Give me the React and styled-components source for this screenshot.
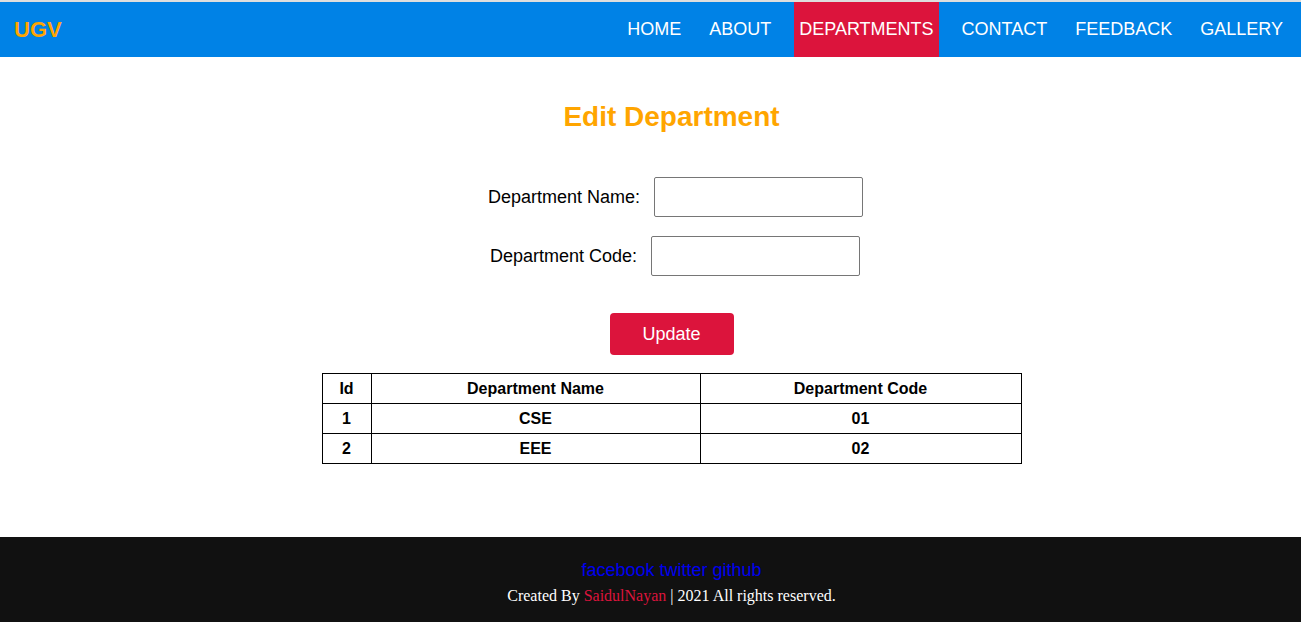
import React from "react";
import styled, { createGlobalStyle } from "styled-components";

const GlobalStyle = createGlobalStyle`
  * {
    box-sizing: border-box;
  }
  body {
    margin: 0;
    font-family: "Liberation Sans", Arial, sans-serif;
    background: #fff;
  }
`;

const Page = styled.div`
  border-top: 2px solid #dedede;
  min-height: 622px;
  display: flex;
  flex-direction: column;
`;

const Nav = styled.nav`
  height: 55px;
  background-color: #0082e6;
  display: flex;
  align-items: stretch;
  justify-content: space-between;
  padding: 0 13px 0 14px;
`;

const Logo = styled.div`
  color: #ffa500;
  font-size: 22px;
  font-weight: 700;
  display: flex;
  align-items: center;
  padding-top: 1px;
`;

const Links = styled.ul`
  list-style: none;
  margin: 0;
  padding: 0;
  display: flex;
  gap: 18px;
`;

const NavLink = styled.li`
  display: flex;
  align-items: center;
  padding: 0 5px;
  color: #fff;
  font-size: 18px;
  text-transform: uppercase;
  background-color: ${(p) => (p.active ? "#dc143c" : "transparent")};
`;

const Main = styled.main`
  flex: 1;
  display: flex;
  flex-direction: column;
  align-items: center;
  padding: 44px 0 72px 42px;
`;

const Title = styled.h2`
  margin: 0 0 44px;
  color: #ffa500;
  font-size: 28px;
  font-weight: 700;
`;

const Form = styled.form`
  display: flex;
  flex-direction: column;
  align-items: center;
  gap: 19px;
`;

const Row = styled.div`
  display: flex;
  align-items: center;
  gap: 14px;
  margin-left: ${(p) => p.shift || 0}px;
`;

const Label = styled.label`
  font-size: 18px;
  color: #000;
`;

const Input = styled.input`
  width: 209px;
  height: 40px;
  border: 1px solid #767676;
  border-radius: 2px;
  font-size: 16px;
  padding: 0 6px;
`;

const Button = styled.button`
  margin-top: 18px;
  width: 124px;
  height: 42px;
  border: none;
  border-radius: 4px;
  background-color: #dc143c;
  color: #fff;
  font-family: "Liberation Sans", Arial, sans-serif;
  font-size: 18px;
  cursor: pointer;
`;

const Table = styled.table`
  margin-top: 18px;
  width: 700px;
  border-collapse: collapse;
`;

const Cell = styled.td`
  border: 1px solid #000;
  height: 30px;
  padding: 0;
  text-align: center;
  font-size: 16px;
  font-weight: 700;
  width: ${(p) => p.w || "auto"};
`;

const Footer = styled.footer`
  background-color: #111;
  height: 85px;
  display: flex;
  flex-direction: column;
  align-items: center;
  padding-top: 23px;
  padding-left: 42px;
`;

const Social = styled.div`
  display: flex;
  gap: 5px;
  font-size: 18px;
`;

const SocialLink = styled.a`
  color: #0000ee;
  text-decoration: none;
`;

const Credit = styled.p`
  margin: 6px 0 0;
  color: #fff;
  font-family: "Liberation Serif", "Times New Roman", serif;
  font-size: 16px;
`;

const Author = styled.span`
  color: #dc143c;
`;

const departments = [
  { id: 1, name: "CSE", code: "01" },
  { id: 2, name: "EEE", code: "02" },
];

export default function App() {
  return (
    <>
      <GlobalStyle />
      <Page>
        <Nav>
          <Logo>UGV</Logo>
          <Links>
            <NavLink>Home</NavLink>
            <NavLink>About</NavLink>
            <NavLink active>Departments</NavLink>
            <NavLink>Contact</NavLink>
            <NavLink>Feedback</NavLink>
            <NavLink>Gallery</NavLink>
          </Links>
        </Nav>
        <Main>
          <Title>Edit Department</Title>
          <Form onSubmit={(e) => e.preventDefault()}>
            <Row shift={8}>
              <Label>Department Name:</Label>
              <Input type="text" />
            </Row>
            <Row shift={7}>
              <Label>Department Code:</Label>
              <Input type="text" />
            </Row>
            <Button type="submit">Update</Button>
          </Form>
          <Table>
            <tbody>
              <tr>
                <Cell w="49px">Id</Cell>
                <Cell w="329px">Department Name</Cell>
                <Cell>Department Code</Cell>
              </tr>
              {departments.map((d) => (
                <tr key={d.id}>
                  <Cell>{d.id}</Cell>
                  <Cell>{d.name}</Cell>
                  <Cell>{d.code}</Cell>
                </tr>
              ))}
            </tbody>
          </Table>
        </Main>
        <Footer>
          <Social>
            <SocialLink href="#">facebook</SocialLink>
            <SocialLink href="#">twitter</SocialLink>
            <SocialLink href="#">github</SocialLink>
          </Social>
          <Credit>
            Created By <Author>SaidulNayan</Author> | 2021 All rights reserved.
          </Credit>
        </Footer>
      </Page>
    </>
  );
}
